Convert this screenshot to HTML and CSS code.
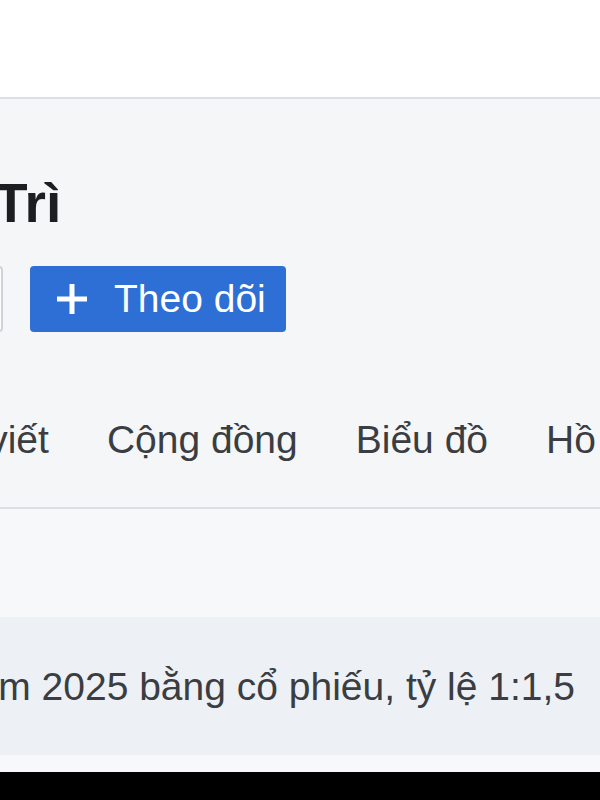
FILE: index.html
```html
<!DOCTYPE html>
<html lang="vi">
<head>
  <meta charset="utf-8">
  <title>Trì - Hồ sơ</title>
  <link rel="stylesheet" href="styles.css">
</head>
<body>

  <div class="topbar"></div>

  <div class="profile">
    <h1 class="name">Trì</h1>

    <div class="actions">
      <button class="btn-outline">Nhắn tin</button>
      <button class="btn-follow">
        <svg class="plus" width="34" height="34" viewBox="0 0 34 34">
          <path d="M17 2v30M2 17h30" stroke="#fff" stroke-width="5" fill="none"/>
        </svg>
        <span>Theo dõi</span>
      </button>
    </div>

    <nav class="tabs">
      <span class="tab">Bài viết</span>
      <span class="tab">Cộng đồng</span>
      <span class="tab">Biểu đồ</span>
      <span class="tab">Hồ sơ</span>
    </nav>
  </div>

  <div class="spacer"></div>

  <div class="notice">
    <span>Chia cổ tức năm 2025 bằng cổ phiếu, tỷ lệ 1:1,5</span>
  </div>
  <div class="notice-foot"></div>

  <div class="bottom-bar"></div>

</body>
</html>
```

FILE: styles.css
```css
:root {
  --panel: #f5f6f8;
  --line: #dcdfe3;
  --blue: #2d6fd5;
  --title: #1c1e21;
  --text: #3a3d42;
  --notice: #edf1f5;
}

* {
  box-sizing: border-box;
}

body {
  margin: 0;
  width: 600px;
  height: 800px;
  overflow: hidden;
  background: #fff;
  font-family: "Liberation Sans", Arial, sans-serif;
}

.topbar {
  height: 97px;
  background: #fff;
}

.profile {
  background: var(--panel);
  border-top: 2px solid var(--line);
  border-bottom: 2px solid var(--line);
  padding-top: 77px;
  overflow: hidden;
}

.name {
  margin: 0 0 0 -6px;
  font-size: 55px;
  line-height: 55px;
  font-weight: bold;
  color: var(--title);
  white-space: nowrap;
}

.actions {
  display: flex;
  gap: 27px;
  margin-top: 35px;
  margin-left: -157px;
}

.actions button {
  height: 66px;
  border-radius: 4px;
  font-family: inherit;
  font-size: 39px;
  cursor: pointer;
}

.btn-outline {
  width: 160px;
  background: #fff;
  border: 2px solid #cfd3d8;
  color: var(--text);
}

.btn-follow {
  display: flex;
  align-items: center;
  gap: 25px;
  padding: 0 20px 0 25px;
  background: var(--blue);
  border: none;
  color: #fff;
}

.plus {
  display: block;
}

.tabs {
  display: flex;
  gap: 58px;
  margin-top: 86px;
  margin-left: -79px;
  padding-bottom: 45px;
  white-space: nowrap;
}

.tab {
  font-size: 39px;
  line-height: 44px;
  color: var(--text);
}

.spacer {
  height: 108px;
  background: #f7f8fa;
}

.notice {
  display: flex;
  justify-content: flex-end;
  padding: 47px 25px 46px 0;
  background: var(--notice);
  white-space: nowrap;
  font-size: 39px;
  line-height: 45px;
  color: var(--text);
}

.notice-foot {
  height: 17px;
  background: #f6f8fb;
}

.bottom-bar {
  height: 40px;
  background: #000;
}
```
